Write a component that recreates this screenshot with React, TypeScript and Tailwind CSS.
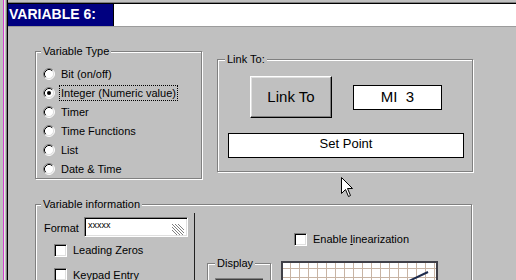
import React from "react";

const F = "font-['Liberation_Sans',Arial,sans-serif]";

function GroupBox({
  label,
  className,
  legendClass,
  children,
}: {
  label: string;
  className: string;
  legendClass: string;
  children?: React.ReactNode;
}) {
  return (
    <div
      className={
        "relative shrink-0 border border-[#808080] shadow-[inset_1px_1px_0_#fff,1px_1px_0_#fff] " +
        className
      }
    >
      <div
        className={
          "absolute top-[-7px] px-[2px] bg-[#c0c0c0] text-[11px] leading-[13px] text-black whitespace-nowrap " +
          legendClass
        }
      >
        {label}
      </div>
      {children}
    </div>
  );
}

function Radio({ checked }: { checked?: boolean }) {
  return (
    <svg width="12" height="12" viewBox="0 0 12 12" className="shrink-0">
      <circle cx="6" cy="6" r="5" fill="#fff" />
      <path d="M2.11 9.89 A5.5 5.5 0 0 1 9.89 2.11" stroke="#808080" strokeWidth="1" fill="none" />
      <path d="M9.89 2.11 A5.5 5.5 0 0 1 2.11 9.89" stroke="#fff" strokeWidth="1" fill="none" />
      <path d="M2.82 9.18 A4.5 4.5 0 0 1 9.18 2.82" stroke="#000" strokeWidth="1" fill="none" />
      <path d="M9.18 2.82 A4.5 4.5 0 0 1 2.82 9.18" stroke="#dfdfdf" strokeWidth="1" fill="none" />
      {checked && <circle cx="6" cy="6" r="2" fill="#000" />}
    </svg>
  );
}

function Check() {
  return (
    <div className="w-[13px] h-[13px] shrink-0 bg-white border border-t-[#808080] border-l-[#808080] border-r-white border-b-white shadow-[inset_1px_1px_0_#000,inset_-1px_-1px_0_#dfdfdf]" />
  );
}

function RadioRow({ label, checked }: { label: string; checked?: boolean }) {
  return (
    <div className="h-[19px] flex items-center">
      <Radio checked={checked} />
      {checked ? (
        <span className="ml-[4px] px-[1px] leading-[14px] border border-dotted border-black">{label}</span>
      ) : (
        <span className="ml-[6px] leading-[14px]">{label}</span>
      )}
    </div>
  );
}

function Graph() {
  const v: number[] = [];
  for (let x = 7; x < 153; x += 9) v.push(x);
  const h: number[] = [];
  for (let y = 5; y < 40; y += 9) h.push(y);
  return (
    <svg width="153" height="40" className="block">
      <rect width="153" height="40" fill="#fff" />
      {v.map((x) => (
        <line key={"v" + x} x1={x + 0.5} y1="0" x2={x + 0.5} y2="40" stroke="#c8b4a4" strokeWidth="1" />
      ))}
      {h.map((y) => (
        <line key={"h" + y} x1="0" y1={y + 0.5} x2="153" y2={y + 0.5} stroke="#c8b4a4" strokeWidth="1" />
      ))}
      <line x1="126" y1="18" x2="145" y2="9" stroke="#1c2a4c" strokeWidth="2" />
    </svg>
  );
}

export default function App() {
  return (
    <div className={"relative w-[516px] h-[280px] overflow-hidden bg-[#c0c0c0] flex text-black " + F}>
      {/* left frame strips */}
      <div className="w-[3px] shrink-0 bg-[#c0c0c0]" />
      <div className="w-px shrink-0 bg-[#d040d0]" />
      <div className="w-px shrink-0 bg-[#e8e8e8]" />
      <div className="w-px shrink-0 bg-[#c0c0c0]" />
      <div className="w-px shrink-0 bg-[#808080]" />
      <div className="w-px shrink-0 bg-black" />

      <div className="flex-1 flex flex-col">
        <div className="h-[2px] shrink-0 bg-[#c0c0c0]" />
        <div className="h-px shrink-0 bg-[#808080]" />
        <div className="h-px shrink-0 bg-black" />
        {/* title row */}
        <div className="h-[22px] shrink-0 flex">
          <div className="w-[105px] bg-[#000080] text-white font-bold text-[14px] leading-[16px] pt-[2px] pl-[1px] whitespace-nowrap">
            VARIABLE 6:
          </div>
          <div className="w-px bg-black" />
          <div className="flex-1 bg-white" />
        </div>
        <div className="h-px shrink-0 bg-[#9c9c9c]" />

        {/* main */}
        <div className="shrink-0 flex flex-col text-[11px]">
          <div className="flex items-start pl-[27px] pt-[24px]">
            <GroupBox label="Variable Type" className="w-[167px] h-[128px]" legendClass="left-[5px]">
              <div className="pl-[7px] pt-[12px] flex flex-col">
                <RadioRow label="Bit (on/off)" />
                <RadioRow label="Integer (Numeric value)" checked />
                <RadioRow label="Timer" />
                <RadioRow label="Time Functions" />
                <RadioRow label="List" />
                <RadioRow label="Date & Time" />
              </div>
            </GroupBox>

            <GroupBox label="Link To:" className="ml-[15px] mt-[8px] w-[256px] h-[113px]" legendClass="left-[7px]">
              <div className="flex flex-col">
                <div className="flex items-center ml-[32px] mt-[16px]">
                  <div className="w-[82px] h-[42px] flex items-center justify-center text-[15px] border border-t-white border-l-white border-r-black border-b-black shadow-[inset_-1px_-1px_0_#808080,inset_1px_1px_0_#dfdfdf]">
                    Link To
                  </div>
                  <div className="ml-[21px] w-[89px] h-[25px] bg-white border border-black flex items-center justify-center text-[15px] whitespace-pre">
                    {"MI  3"}
                  </div>
                </div>
                <div className="ml-[10px] mt-[15px] w-[236px] h-[25px] bg-white border border-black flex justify-center text-[13px] leading-[15px] pt-[2px]">
                  Set Point
                </div>
              </div>
            </GroupBox>
          </div>

          <div className="pl-[27px] mt-[25px]">
            <GroupBox label="Variable information" className="w-[437px] h-[100px]" legendClass="left-[5px]">
              <div className="flex h-full">
                <div className="w-[158px] pl-[8px] pt-[12px] flex flex-col">
                  <div className="flex items-center">
                    <span className="w-[40px] pt-[3px]">Format</span>
                    <div className="relative w-[104px] h-[20px] bg-white border border-t-[#808080] border-l-[#808080] border-r-white border-b-white shadow-[inset_1px_1px_0_#000,inset_-1px_-1px_0_#dfdfdf]">
                      <span className="absolute left-[3px] top-[2px] text-[9px] leading-[10px]">xxxxx</span>
                      <svg width="13" height="12" viewBox="0 0 13 12" className="absolute right-[3px] bottom-[1px]">
                        <line x1="1" y1="1" x2="12" y2="12" stroke="#808080" />
                        <line x1="4" y1="1" x2="13" y2="10" stroke="#808080" />
                        <line x1="1" y1="4" x2="9" y2="12" stroke="#808080" />
                        <line x1="7" y1="1" x2="13" y2="7" stroke="#808080" />
                        <line x1="1" y1="7" x2="6" y2="12" stroke="#808080" />
                        <line x1="2" y1="1" x2="13" y2="12" stroke="#fff" />
                      </svg>
                    </div>
                  </div>
                  <div className="flex items-center ml-[10px] mt-[5px]">
                    <Check />
                    <span className="ml-[6px]">Leading Zeros</span>
                  </div>
                  <div className="flex items-center ml-[10px] mt-[8px]">
                    <Check />
                    <span className="ml-[6px]">Keypad Entry</span>
                  </div>
                </div>
                <div className="w-px bg-[#202020] mt-[8px]" />
                <div className="flex-1 flex flex-col">
                  <div className="flex items-center ml-[99px] mt-[26px]">
                    <Check />
                    <span className="ml-[6px]">
                      Enable <span className="underline">l</span>inearization
                    </span>
                  </div>
                  <div className="flex items-start mt-[13px]">
                    <GroupBox label="Display" className="ml-[12px] mt-[2px] w-[64px] h-[40px]" legendClass="left-[7px]">
                      <div className="mx-[7px] mt-[14px] h-[20px] border-t border-t-[#808080] border-l border-l-[#808080] shadow-[inset_1px_1px_0_#404040]" />
                    </GroupBox>
                    <div className="ml-[10px] w-[157px] h-[44px] border-2 border-[#404048]">
                      <Graph />
                    </div>
                  </div>
                </div>
              </div>
            </GroupBox>
          </div>
        </div>
      </div>

      {/* mouse cursor */}
      <svg width="13" height="21" viewBox="0 0 13 21" className="absolute left-[341px] top-[177px]">
        <path d="M0.5 0.5 L0.5 16.5 L4.5 12.5 L7.5 19.5 L9.5 18.5 L6.5 11.5 L11.5 11.5 Z" fill="#fff" stroke="#000" strokeWidth="1" />
      </svg>
    </div>
  );
}
